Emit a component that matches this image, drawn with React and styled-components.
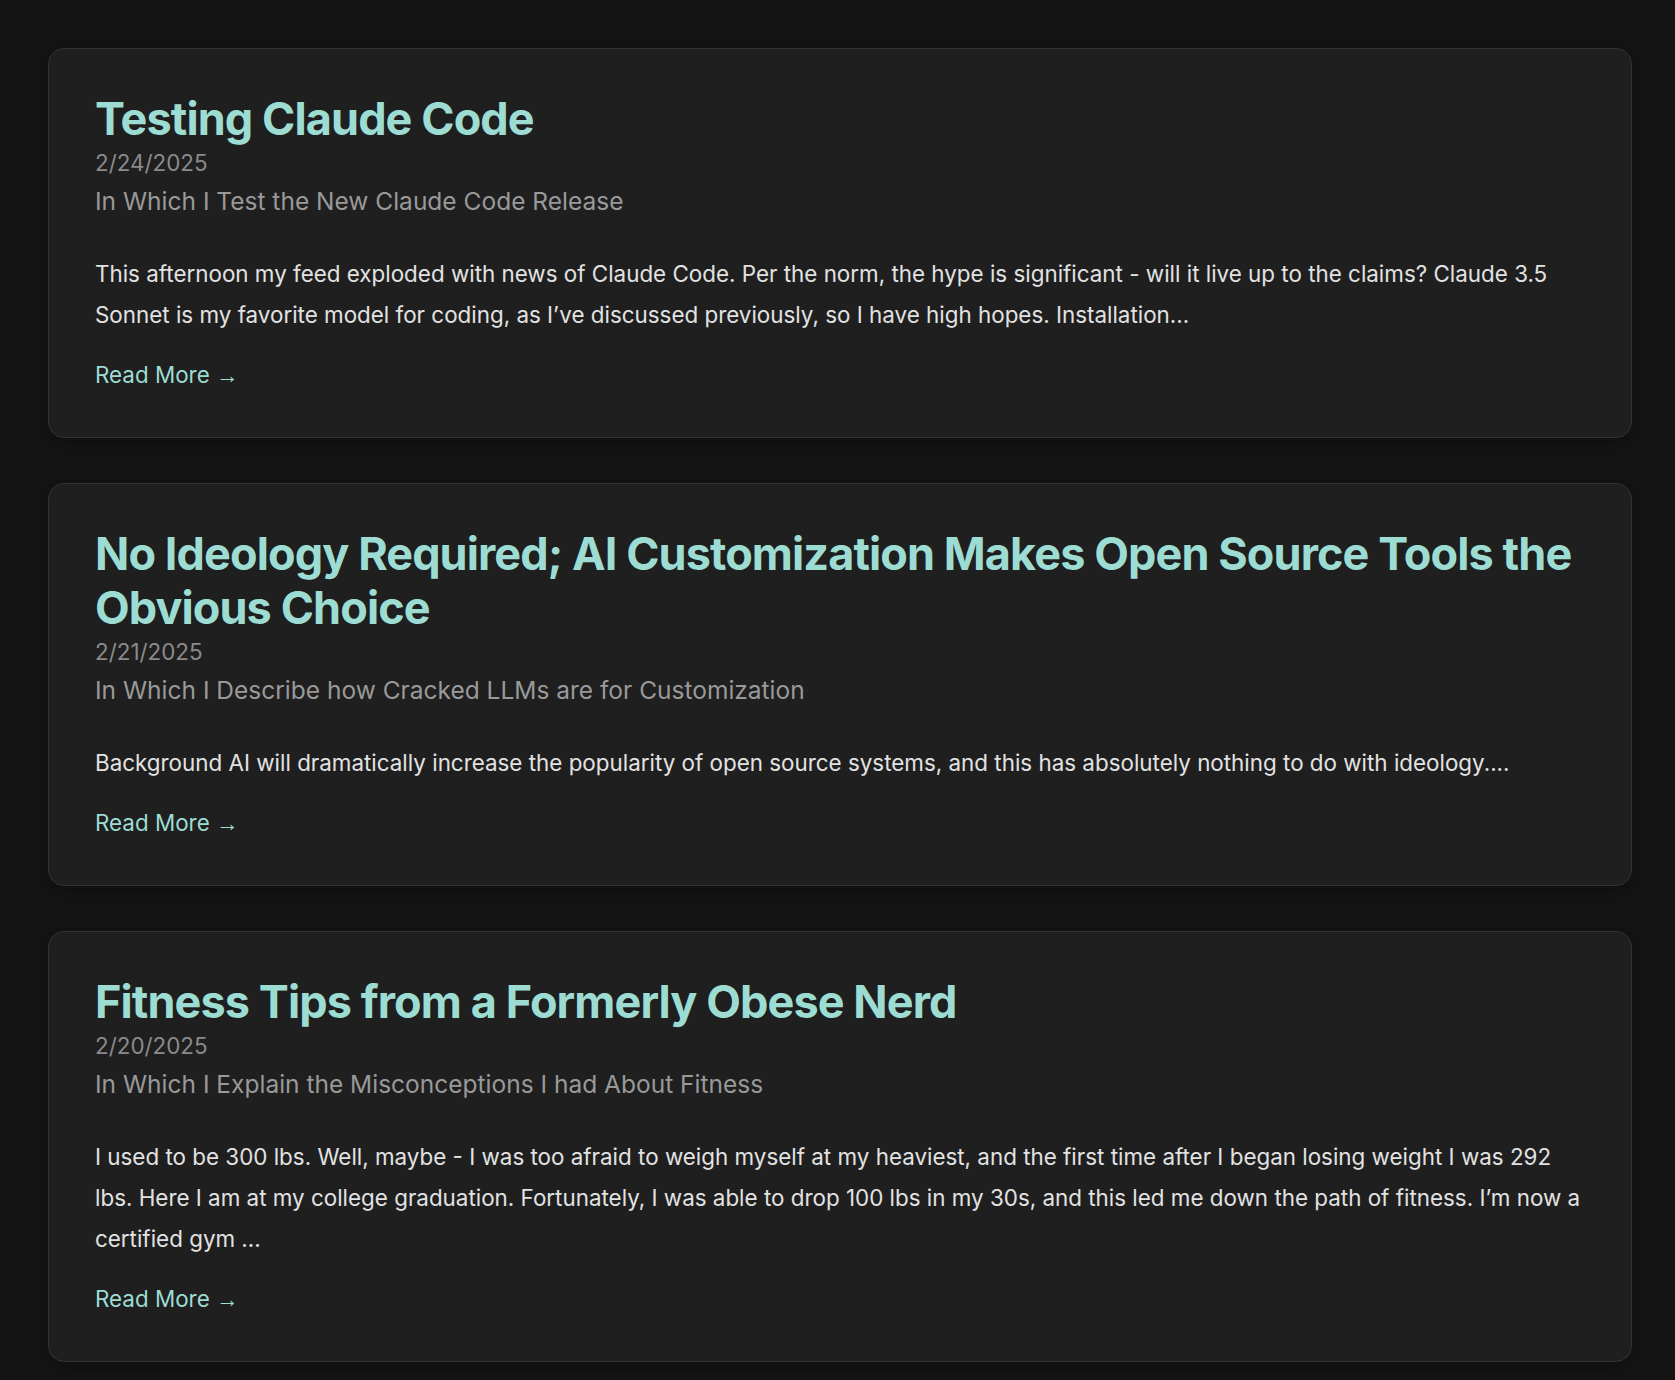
import React from 'react';
import styled, { createGlobalStyle } from 'styled-components';

const GlobalStyle = createGlobalStyle`
    html, body {
        margin: 0;
        padding: 0;
        background-color: #141414;
    }
    body {
        font-family: Inter, "Noto Sans", sans-serif;
        color: #e2e2e2;
    }
`;

const Feed = styled.main`
    box-sizing: border-box;
    width: 1584px;
    margin: 0 0 0 48px;
    padding: 48px 0 24px;
    display: flex;
    flex-direction: column;
    gap: 45px;
`;

const Card = styled.article`
    box-sizing: border-box;
    display: flex;
    flex-direction: column;
    background-color: #1f1f1f;
    border: 1px solid #333333;
    border-radius: 16px;
    padding: 43px 46px 44px;
    box-shadow: 0 4px 18px rgba(0, 0, 0, 0.3);
`;

const Title = styled.h2`
    margin: 0;
    font-size: 45px;
    line-height: 54px;
    font-weight: 700;
    letter-spacing: -0.9px;
    color: #9ddcd3;
`;

const Date = styled.div`
    font-size: 22.4px;
    line-height: 34px;
    color: #8a8a8a;
`;

const Subtitle = styled.div`
    margin-top: 3px;
    font-size: 24.5px;
    line-height: 36px;
    color: #999999;
`;

const Excerpt = styled.p`
    margin: 34px 0 0;
    font-size: 22.4px;
    line-height: 41px;
    color: #e2e2e2;
`;

const ReadMore = styled.a`
    align-self: flex-start;
    margin-top: 23px;
    font-size: 22.4px;
    line-height: 34px;
    color: #9ddcd3;
    text-decoration: none;
    cursor: pointer;
`;

const Arrow = styled.span`
    font-family: "Liberation Sans", Arial, sans-serif;
`;

const posts = [
    {
        title: 'Testing Claude Code',
        date: '2/24/2025',
        subtitle: 'In Which I Test the New Claude Code Release',
        excerpt:
            'This afternoon my feed exploded with news of Claude Code. Per the norm, the hype is significant - will it live up to the claims? Claude 3.5 Sonnet is my favorite model for coding, as I\u2019ve discussed previously, so I have high hopes. Installation...',
    },
    {
        title: 'No Ideology Required; AI Customization Makes Open Source Tools the Obvious Choice',
        date: '2/21/2025',
        subtitle: 'In Which I Describe how Cracked LLMs are for Customization',
        excerpt:
            'Background AI will dramatically increase the popularity of open source systems, and this has absolutely nothing to do with ideology....',
    },
    {
        title: 'Fitness Tips from a Formerly Obese Nerd',
        date: '2/20/2025',
        subtitle: 'In Which I Explain the Misconceptions I had About Fitness',
        excerpt:
            'I used to be 300 lbs. Well, maybe - I was too afraid to weigh myself at my heaviest, and the first time after I began losing weight I was 292 lbs. Here I am at my college graduation. Fortunately, I was able to drop 100 lbs in my 30s, and this led me down the path of fitness. I\u2019m now a certified gym ...',
    },
];

const App = () => {
    return (
        <>
            <GlobalStyle />
            <Feed>
                {posts.map((post) => (
                    <Card key={post.title}>
                        <Title>{post.title}</Title>
                        <Date>{post.date}</Date>
                        <Subtitle>{post.subtitle}</Subtitle>
                        <Excerpt>{post.excerpt}</Excerpt>
                        <ReadMore>
                            Read More <Arrow>→</Arrow>
                        </ReadMore>
                    </Card>
                ))}
            </Feed>
        </>
    );
};

export default App;
